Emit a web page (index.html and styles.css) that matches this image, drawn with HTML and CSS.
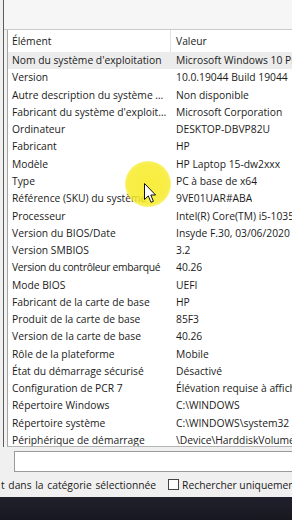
FILE: index.html
```html
<!DOCTYPE html>
<html lang="fr">
<head>
<meta charset="utf-8">
<title>Informations système</title>
<link rel="stylesheet" href="styles.css">
</head>
<body>
<div class="screen">
  <div class="frame">
    <div class="topbar"></div>
    <div class="list">
      <div class="header">
        <div class="col-name">Élément</div>
        <div class="col-value">Valeur</div>
      </div>
      <div class="row selected"><div class="col-name">Nom du système d'exploitation</div><div class="col-value">Microsoft Windows 10 Professionnel</div></div>
      <div class="row"><div class="col-name">Version</div><div class="col-value">10.0.19044 Build 19044</div></div>
      <div class="row"><div class="col-name">Autre description du système d'exploitation</div><div class="col-value">Non disponible</div></div>
      <div class="row"><div class="col-name">Fabricant du système d'exploitation</div><div class="col-value">Microsoft Corporation</div></div>
      <div class="row"><div class="col-name">Ordinateur</div><div class="col-value">DESKTOP-DBVP82U</div></div>
      <div class="row"><div class="col-name">Fabricant</div><div class="col-value">HP</div></div>
      <div class="row"><div class="col-name">Modèle</div><div class="col-value">HP Laptop 15-dw2xxx</div></div>
      <div class="row"><div class="col-name">Type</div><div class="col-value">PC à base de x64</div></div>
      <div class="row"><div class="col-name">Référence (SKU) du système</div><div class="col-value">9VE01UAR#ABA</div></div>
      <div class="row"><div class="col-name">Processeur</div><div class="col-value">Intel(R) Core(TM) i5-1035G1 CPU @ 1.00GHz</div></div>
      <div class="row"><div class="col-name">Version du BIOS/Date</div><div class="col-value">Insyde F.30, 03/06/2020</div></div>
      <div class="row"><div class="col-name">Version SMBIOS</div><div class="col-value">3.2</div></div>
      <div class="row"><div class="col-name tight">Version du contrôleur embarqué</div><div class="col-value">40.26</div></div>
      <div class="row"><div class="col-name">Mode BIOS</div><div class="col-value">UEFI</div></div>
      <div class="row"><div class="col-name">Fabricant de la carte de base</div><div class="col-value">HP</div></div>
      <div class="row"><div class="col-name">Produit de la carte de base</div><div class="col-value">85F3</div></div>
      <div class="row"><div class="col-name">Version de la carte de base</div><div class="col-value">40.26</div></div>
      <div class="row"><div class="col-name">Rôle de la plateforme</div><div class="col-value">Mobile</div></div>
      <div class="row"><div class="col-name">État du démarrage sécurisé</div><div class="col-value">Désactivé</div></div>
      <div class="row"><div class="col-name">Configuration de PCR 7</div><div class="col-value">Élévation requise à afficher</div></div>
      <div class="row"><div class="col-name">Répertoire Windows</div><div class="col-value">C:\WINDOWS</div></div>
      <div class="row"><div class="col-name">Répertoire système</div><div class="col-value">C:\WINDOWS\system32</div></div>
      <div class="row"><div class="col-name">Périphérique de démarrage</div><div class="col-value">\Device\HarddiskVolume1</div></div>
    </div>
  </div>
  <div class="search">
    <div class="searchbox"></div>
    <div class="options">
      <span class="opt-text wide">t dans la catégorie sélectionnée</span>
      <span class="checkbox"></span>
      <span class="opt-text">Rechercher uniquement les noms de catégorie</span>
    </div>
  </div>
  <div class="taskbar"></div>

  <div class="highlight"></div>
  <svg class="pointer" width="13" height="21" viewBox="0 0 13 21">
    <path d="M0.5 0.5 L0.5 16.5 L4.3 12.9 L7 19.3 L9.4 18.3 L6.8 12 L11.6 12 Z" fill="#ffffff" stroke="#111111" stroke-width="1" stroke-linejoin="round"/>
  </svg>
</div>
</body>
</html>
```

FILE: styles.css
```css
* { box-sizing: border-box; }

html, body {
  margin: 0;
  padding: 0;
}

body {
  width: 292px;
  height: 520px;
  overflow: hidden;
  background: #f0f0f0;
  font-family: "Open Sans", "Noto Sans", sans-serif;
  font-size: 10.3px;
  color: #1b1b1b;
}

.screen {
  position: relative;
  width: 292px;
  height: 520px;
  display: flex;
  flex-direction: column;
  overflow: hidden;
}

.frame {
  height: 447px;
  margin-left: 3px;
  border-left: 1px solid #5c5c5c;
  display: flex;
  flex-direction: column;
  background: #f2f2f2;
}

.topbar {
  height: 30px;
  flex: none;
  border-bottom: 1px solid #c9c9c9;
  background: #f6f6f6;
}

.list {
  flex: 1;
  margin-left: 3px;
  border-left: 1px solid #a5a5a5;
  border-bottom: 1px solid #b5b5b5;
  background: #ffffff;
  overflow: hidden;
}

.header {
  display: flex;
  height: 21.5px;
  align-items: center;
}

.header .col-name {
  border-right: 1px solid #e2e2e2;
  height: 100%;
  display: flex;
  align-items: center;
}

.row {
  display: flex;
  height: 17.27px;
  align-items: center;
}

.row.selected {
  background: #ececec;
}

.col-name {
  width: 163px;
  flex: none;
  padding: 0 4px 0 4px;
  white-space: nowrap;
  overflow: hidden;
  text-overflow: ellipsis;
}

.col-name.tight {
  letter-spacing: -0.3px;
  padding-right: 1px;
}

.col-value {
  padding-left: 5px;
  white-space: nowrap;
  overflow: hidden;
}

.search {
  height: 50px;
  flex: none;
  display: flex;
  flex-direction: column;
}

.searchbox {
  margin: 4px 0 0 14px;
  height: 21px;
  width: 300px;
  background: #ffffff;
  border: 1px solid #9a9a9a;
}

.options {
  display: flex;
  align-items: center;
  height: 25px;
  padding-left: 1px;
  white-space: nowrap;
}

.opt-text {
  flex: none;
}

.opt-text.wide {
  word-spacing: 1px;
}

.checkbox {
  flex: none;
  width: 11px;
  height: 11px;
  margin: 0 3px 0 12px;
  border: 1px solid #444;
  background: #fff;
}

.taskbar {
  flex: 1;
  background: linear-gradient(180deg, #20212c 0%, #17181f 100%);
}

.highlight {
  position: absolute;
  left: 125px;
  top: 161px;
  width: 46px;
  height: 46px;
  border-radius: 50%;
  background: radial-gradient(circle, rgba(247, 235, 40, 0.9) 0%, rgba(247, 235, 40, 0.85) 62%, rgba(247, 235, 40, 0) 100%);
}

.pointer {
  position: absolute;
  left: 144px;
  top: 183px;
}
```
